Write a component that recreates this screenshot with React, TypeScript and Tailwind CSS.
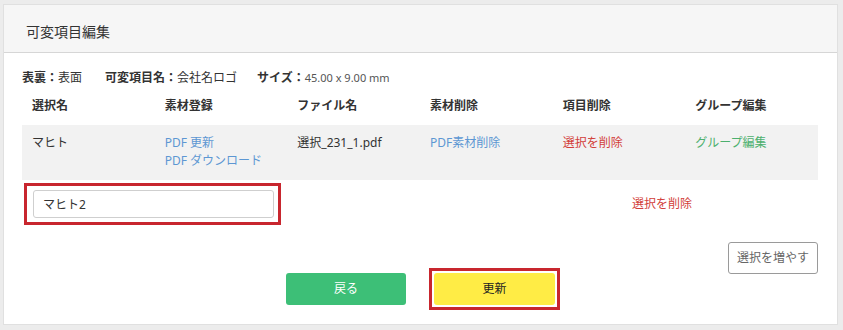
const COLUMNS = ["選択名", "素材登録", "ファイル名", "素材削除", "項目削除", "グループ編集"] as const;

export default function App() {
  return (
    <div
      className="min-h-[330px] w-full bg-[#ececec] pl-[3px] pr-[5px] pt-[4px] pb-[5px] text-[#333]"
      style={{ fontFamily: '"Noto Sans", "Noto Sans CJK JP", sans-serif' }}
    >
      <div className="flex min-h-[321px] flex-col border border-[#e0e0e0] bg-white">
        <header className="flex h-[48px] items-center border-b border-[#d6d6d6] bg-[#f6f6f6] pl-[22px] pt-[6px] text-[14px]">
          可変項目編集
        </header>

        <div className="flex flex-1 flex-col pl-[18px] pr-[19px] pb-[13px]">
          <div className="mt-[16px] flex items-center text-[12px] leading-[18px]">
            <span className="font-bold">表裏：</span>
            <span>表面</span>
            <span className="ml-[23px] font-bold">可変項目名：</span>
            <span>会社名ロゴ</span>
            <span className="ml-[20px] font-bold">サイズ：</span>
            <span className="text-[11px] text-[#555]">45.00 x 9.00 mm</span>
          </div>

          <table className="mt-[3px] w-full table-fixed border-collapse text-[12px] leading-[18px]">
            <thead>
              <tr>
                {COLUMNS.map((c) => (
                  <th key={c} className="h-[35px] pb-[10px] pl-[10px] pt-[7px] text-left align-top font-bold">
                    {c}
                  </th>
                ))}
              </tr>
            </thead>
            <tbody>
              <tr className="bg-[#f2f2f2]">
                <td className="h-[55px] pl-[10px] pt-[9px] align-top">マヒト</td>
                <td className="pl-[10px] pt-[9px] align-top text-[#5d97d3]">
                  <div>PDF 更新</div>
                  <div>PDF ダウンロード</div>
                </td>
                <td className="pl-[10px] pt-[9px] align-top">選択_231_1.pdf</td>
                <td className="pl-[10px] pt-[9px] align-top text-[#5d97d3]">PDF素材削除</td>
                <td className="pl-[10px] pt-[9px] align-top text-[#d2403a]">選択を削除</td>
                <td className="pl-[10px] pt-[9px] align-top text-[#4cb06e]">グループ編集</td>
              </tr>
            </tbody>
          </table>

          <div className="mt-[3px] flex items-center">
            <div className="ml-[2px] border-[3px] border-[#c8262e] pb-[4px] pl-[6px] pr-[4px] pt-[4px]">
              <input
                readOnly
                value="マヒト2"
                className="block h-[28px] w-[241px] rounded-[3px] border border-[#cfcfcf] bg-white px-[9px] text-[12px] text-[#333] outline-none"
              />
            </div>
            <span className="ml-[351px] text-[12px] text-[#d2403a]">選択を削除</span>
          </div>

          <div className="mt-[17px] flex items-start">
            <div className="flex-1" />
            <div className="ml-[6px] flex items-center gap-[23px] pt-[26px]">
              <button className="h-[32px] w-[120px] rounded-[3px] bg-[#3dbf77] text-[12px] text-white">
                戻る
              </button>
              <div className="border-[3px] border-[#c8262e] p-[2px]">
                <button className="block h-[32px] w-[121px] rounded-[3px] bg-[#ffec45] text-[12px] text-[#222]">
                  更新
                </button>
              </div>
            </div>
            <div className="flex flex-1 justify-end">
              <button className="h-[32px] w-[90px] rounded-[3px] border border-[#9a9a9a] bg-white text-[12px] text-[#666]">
                選択を増やす
              </button>
            </div>
          </div>
        </div>
      </div>
    </div>
  );
}
